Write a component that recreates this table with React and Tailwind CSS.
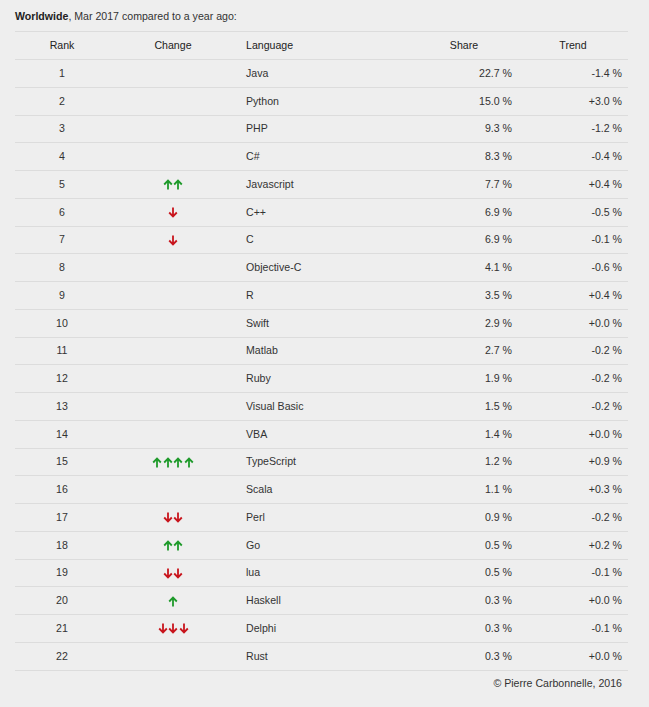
const ROWS = [
  [1, '', 'Java', '22.7 %', '-1.4 %'],
  [2, '', 'Python', '15.0 %', '+3.0 %'],
  [3, '', 'PHP', '9.3 %', '-1.2 %'],
  [4, '', 'C#', '8.3 %', '-0.4 %'],
  [5, 'uu', 'Javascript', '7.7 %', '+0.4 %'],
  [6, 'd', 'C++', '6.9 %', '-0.5 %'],
  [7, 'd', 'C', '6.9 %', '-0.1 %'],
  [8, '', 'Objective-C', '4.1 %', '-0.6 %'],
  [9, '', 'R', '3.5 %', '+0.4 %'],
  [10, '', 'Swift', '2.9 %', '+0.0 %'],
  [11, '', 'Matlab', '2.7 %', '-0.2 %'],
  [12, '', 'Ruby', '1.9 %', '-0.2 %'],
  [13, '', 'Visual Basic', '1.5 %', '-0.2 %'],
  [14, '', 'VBA', '1.4 %', '+0.0 %'],
  [15, 'uuuu', 'TypeScript', '1.2 %', '+0.9 %'],
  [16, '', 'Scala', '1.1 %', '+0.3 %'],
  [17, 'dd', 'Perl', '0.9 %', '-0.2 %'],
  [18, 'uu', 'Go', '0.5 %', '+0.2 %'],
  [19, 'dd', 'lua', '0.5 %', '-0.1 %'],
  [20, 'u', 'Haskell', '0.3 %', '+0.0 %'],
  [21, 'ddd', 'Delphi', '0.3 %', '-0.1 %'],
  [22, '', 'Rust', '0.3 %', '+0.0 %'],
];

const Arrow = ({ up }) => (
  <svg width="10" height="11" viewBox="0 0 10 11" className="block">
    {up ? (
      <path d="M5 10.5V2M1.2 5.5L5 1.6L8.8 5.5" fill="none" stroke="#1e9a2a" strokeWidth="1.8" />
    ) : (
      <path d="M5 0.5V9M1.2 5.5L5 9.4L8.8 5.5" fill="none" stroke="#c8141c" strokeWidth="1.8" />
    )}
  </svg>
);

const Change = ({ code }) => (
  <div className="flex items-center justify-center gap-[0.5px]">
    {code.split('').map((c, i) => (
      <Arrow key={i} up={c === 'u'} />
    ))}
  </div>
);

export default function App() {
  return (
    <div className="min-h-[707px] bg-[#eeeeee] px-[15px] pt-[9px] font-['Liberation_Sans',Arial,sans-serif] text-[10.6px] text-[#333]">
      <p className="h-[22px] leading-[14px]">
        <span className="font-bold text-[#222]">Worldwide</span>, Mar 2017 compared to a year ago:
      </p>
      <div className="w-[613px]">
        <div className="flex h-[28px] items-center border-t border-[#dcdcdc] pt-[1px] text-[#222]">
          <div className="w-[94px] text-center">Rank</div>
          <div className="w-[131px] pr-[3px] text-center">Change</div>
          <div className="w-[170px] pl-[6px]">Language</div>
          <div className="w-[108px] text-center">Share</div>
          <div className="w-[110px] text-center">Trend</div>
        </div>
        {ROWS.map(([rank, ch, lang, share, trend]) => (
          <div
            key={rank}
            className="flex h-[27.75px] items-center border-t border-[#dcdcdc] pt-[1px]"
          >
            <div className="w-[94px] text-center">{rank}</div>
            <div className="w-[131px] pr-[3px]">
              <Change code={ch} />
            </div>
            <div className="w-[170px] pl-[6px]">{lang}</div>
            <div className="w-[108px] pr-[6px] text-right">{share}</div>
            <div className="w-[110px] pr-[6px] text-right">{trend}</div>
          </div>
        ))}
        <div className="flex h-[28px] items-center justify-end border-t border-[#dcdcdc] pr-[6px]">
          © Pierre Carbonnelle, 2016
        </div>
      </div>
    </div>
  );
}
